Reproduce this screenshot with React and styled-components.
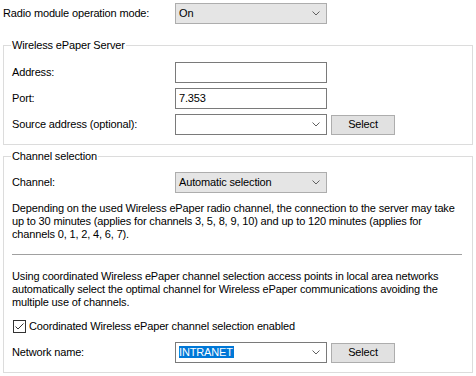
import styled, { createGlobalStyle } from 'styled-components';

const GlobalStyle = createGlobalStyle`
  html, body {
    margin: 0;
    padding: 0;
    background: #ffffff;
  }

  body {
    font-family: "Liberation Sans", Arial, sans-serif;
    font-size: 11px;
    line-height: 13px;
    letter-spacing: -0.15px;
    color: #000000;
  }
`;

const Page = styled.div`
  width: 470px;
  padding: 3px 0 0 3px;
`;

const Row = styled.div`
  display: flex;
  align-items: center;
  height: 21px;
  margin-top: ${props => props.$top || 0}px;
`;

const Label = styled.span`
  width: ${props => props.$width || 163}px;
  flex-shrink: 0;
`;

const Group = styled.fieldset`
  margin: ${props => props.$top}px 0 0 0;
  padding: 10px 8px 9px 8px;
  border: 1px solid #dcdcdc;
  min-width: 0;
  display: flex;
  flex-direction: column;
  gap: 5px;

  &.channels {
    padding-top: 9px;
    gap: 0;
  }
`;

const Legend = styled.legend`
  padding: 0 1px;
  margin-left: -1px;
  line-height: 13px;
`;

const ComboBox = styled.div`
  box-sizing: border-box;
  width: 152px;
  height: 21px;
  display: flex;
  align-items: center;
  justify-content: space-between;
  padding: 0 6px 0 3px;
  border: 1px solid ${props => (props.$editable ? '#7a7a7a' : '#adadad')};
  background: ${props => (props.$editable ? '#ffffff' : '#e5e5e5')};
`;

const TextBox = styled.div`
  box-sizing: border-box;
  width: 152px;
  height: 21px;
  display: flex;
  align-items: center;
  padding: 0 3px;
  border: 1px solid #7a7a7a;
  background: #ffffff;
`;

const Selected = styled.span`
  background: #0078d7;
  color: #ffffff;
  padding: 0 1px 0 0;
`;

const Button = styled.div`
  box-sizing: border-box;
  width: 64px;
  height: 20px;
  margin-left: 4px;
  display: flex;
  align-items: center;
  justify-content: center;
  border: 1px solid #adadad;
  background: #e1e1e1;
`;

const Paragraph = styled.p`
  margin: ${props => props.$top}px 0 0 0;
  white-space: nowrap;
`;

const Separator = styled.div`
  width: 450px;
  height: 1px;
  margin-top: 13px;
  background: #a0a0a0;
`;

const CheckRow = styled.label`
  display: flex;
  align-items: center;
  gap: 3px;
  margin-top: 11px;
  margin-left: 1px;
  height: 13px;
`;

const CheckBox = styled.span`
  box-sizing: border-box;
  width: 13px;
  height: 13px;
  border: 1px solid #333333;
  background: #ffffff;
  display: flex;
  align-items: center;
  justify-content: center;
`;

const Chevron = () => (
  <svg width="8" height="5" viewBox="0 0 8 5">
    <polyline points="0.5,0.5 4,4 7.5,0.5" fill="none" stroke="#606060" strokeWidth="1" />
  </svg>
);

function Combo({ children, editable }) {
  return (
    <ComboBox $editable={editable}>
      <span>{children}</span>
      <Chevron />
    </ComboBox>
  );
}

export default function App() {
  return (
    <Page>
      <GlobalStyle />
      <Row>
        <Label $width={172}>Radio module operation mode:</Label>
        <Combo>On</Combo>
      </Row>

      <Group $top={15}>
        <Legend>Wireless ePaper Server</Legend>
        <Row>
          <Label>Address:</Label>
          <TextBox />
        </Row>
        <Row>
          <Label>Port:</Label>
          <TextBox>7.353</TextBox>
        </Row>
        <Row>
          <Label>Source address (optional):</Label>
          <Combo editable />
          <Button>Select</Button>
        </Row>
      </Group>

      <Group $top={5} className="channels">
        <Legend>Channel selection</Legend>
        <Row>
          <Label>Channel:</Label>
          <Combo>Automatic selection</Combo>
        </Row>
        <Paragraph $top={9}>
          Depending on the used Wireless ePaper radio channel, the connection to the server may take<br />
          up to 30 minutes (applies for channels 3, 5, 8, 9, 10) and up to 120 minutes (applies for<br />
          channels 0, 1, 2, 4, 6, 7).
        </Paragraph>
        <Separator />
        <Paragraph $top={15}>
          Using coordinated Wireless ePaper channel selection access points in local area networks<br />
          automatically select the optimal channel for Wireless ePaper communications avoiding the<br />
          multiple use of channels.
        </Paragraph>
        <CheckRow>
          <CheckBox>
            <svg width="11" height="11" viewBox="0 0 11 11">
              <polyline points="1.5,5.5 4,8 9.5,2.5" fill="none" stroke="#333333" strokeWidth="1" />
            </svg>
          </CheckBox>
          Coordinated Wireless ePaper channel selection enabled
        </CheckRow>
        <Row $top={9}>
          <Label>Network name:</Label>
          <Combo editable>
            <Selected>INTRANET</Selected>
          </Combo>
          <Button>Select</Button>
        </Row>
      </Group>
    </Page>
  );
}
